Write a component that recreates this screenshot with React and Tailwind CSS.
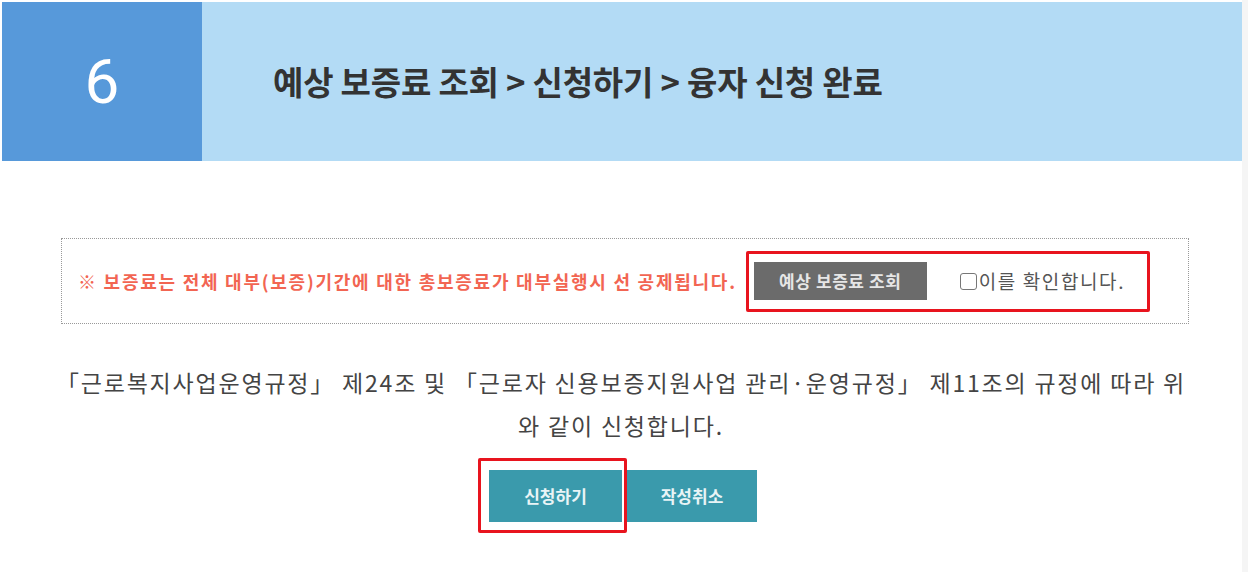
export default function App() {
  return (
    <div
      className="w-[1248px] h-[572px] bg-white overflow-hidden flex"
      style={{ fontFamily: '"Noto Sans CJK KR", "Noto Sans", sans-serif' }}
    >
      <div className="w-[1242px] pt-[2px]">
        {/* step header */}
        <div className="flex ml-[2px] h-[159px]">
          <div className="w-[200px] bg-[#5799da] flex items-center justify-center">
            <span className="text-white text-[62px] leading-none" style={{ fontFamily: "Roboto, sans-serif" }}>6</span>
          </div>
          <div className="flex-1 bg-[#b3dbf5] flex items-center pl-[71px]">
            <h1 className="text-[33px] font-bold text-[#333] tracking-[-0.2px]">
              예상 보증료 조회 &gt; 신청하기 &gt; 융자 신청 완료
            </h1>
          </div>
        </div>

        {/* notice */}
        <div className="mt-[77px] ml-[61px] w-[1128px] h-[86px] border border-dotted border-[#999] flex items-center pl-[16px]">
          <p className="text-[18px] font-bold text-[#f26552] tracking-[1.75px]">
            ※ 보증료는 전체 대부(보증)기간에 대한 총보증료가 대부실행시 선 공제됩니다.
          </p>
          <div className="ml-[9px] border-[3px] border-[#e8141e] rounded-[2px] h-[61px] w-[404px] flex items-center pl-[5px]">
            <button className="w-[173px] h-[38px] bg-[#6b6b6b] text-[#e6e6e6] text-[17px] font-bold tracking-[0.6px]">
              예상 보증료 조회
            </button>
            <label className="ml-[33px] flex items-center text-[19px] text-[#555] tracking-[1.6px]">
              <span className="w-[17px] h-[17px] border border-[#777] rounded-[3px] mr-[2px] bg-white"></span>
              이를 확인합니다.
            </label>
          </div>
        </div>

        {/* agreement text */}
        <div className="mt-[37px] text-center text-[23px] text-[#444] leading-[43px] tracking-[1.8px]">
          「근로복지사업운영규정」 제24조 및 「근로자 신용보증지원사업 관리·운영규정」 제11조의 규정에 따라 위
          <br />
          와 같이 신청합니다.
        </div>

        {/* actions */}
        <div className="mt-[11px] flex justify-center pr-[7px]">
          <div className="border-[3px] border-[#e8141e] rounded-[2px] pt-[9px] pb-[8px] pl-[8px] pr-[2px] relative z-10">
            <button className="w-[133px] h-[52px] bg-[#3a9aac] text-[#e8f4f6] text-[17px] font-bold">신청하기</button>
          </div>
          <div className="pt-[12px]">
            <button className="w-[130px] h-[52px] bg-[#3a9aac] text-[#e8f4f6] text-[17px] font-bold">작성취소</button>
          </div>
        </div>
      </div>
      <div className="flex-1 bg-[#f5f5f5]"></div>
    </div>
  );
}
